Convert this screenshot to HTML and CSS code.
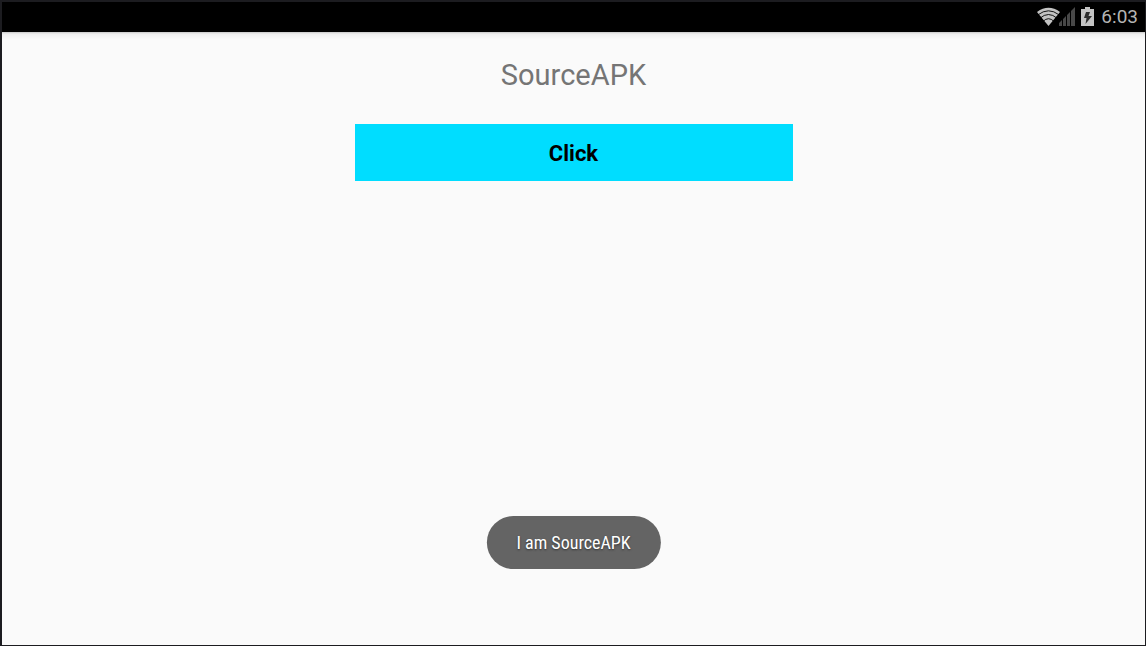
FILE: index.html
```html
<!DOCTYPE html>
<html lang="en">
<head>
<meta charset="utf-8">
<meta name="viewport" content="width=device-width, initial-scale=1">
<title>SourceAPK</title>
<link rel="stylesheet" href="styles.css">
</head>
<body>
<div class="screen">
  <header class="status-bar">
    <svg class="status-icons" width="58" height="20" viewBox="0 0 58 20" aria-hidden="true">
      <path d="M0 5Q11.500-3.400 23 5L11.500 19Z" fill="#c3c3c3"/>
      <g fill="none" stroke="#000" stroke-width=".9">
        <path d="M1 7.800Q11.500-.2 22 7.800"/>
        <path d="M3 11.200Q11.500 3.800 20 11.200"/>
        <path d="M6 14.400Q11.500 9 17 14.400"/>
      </g>
      <path d="M22 19v-3l3-3v6zM26 19v-7l3-3v10zM30 19V8l3-3v14zM34 19V4l4-4v19z" fill="#484848"/>
      <path d="M44 2h4V0h5v2h4v17H44z" fill="#c3c3c3"/>
      <path d="M49 5h4l-1.500 4H55l-6.500 8 1-6H47z" fill="#2b2b2b"/>
    </svg>
    <time class="clock">6:03</time>
  </header>
  <main class="content">
    <h1 class="title">SourceAPK</h1>
    <button class="click-button" type="button">Click</button>
  </main>
  <div class="toast" role="status">I am SourceAPK</div>
</div>
</body>
</html>
```
FILE: styles.css
```css
* {
  box-sizing: border-box;
}

body {
  margin: 0;
  font-family: Roboto, "Liberation Sans", sans-serif;
}

.screen {
  position: relative;
  display: flex;
  flex-direction: column;
  min-height: 100vh;
  border: solid #1c1c20;
  border-width: 2px 1px 1px 2px;
  background: #fafafa;
}

.status-bar {
  display: flex;
  align-items: center;
  justify-content: flex-end;
  gap: 6px;
  height: 30px;
  padding-right: 7px;
  background: #000;
  color: #b4b4b4;
}

.status-icons {
  display: block;
}

.clock {
  font-size: 19px;
  line-height: 30px;
}

.content {
  display: flex;
  flex: 1;
  flex-direction: column;
  align-items: center;
  gap: 29px;
  padding-top: 24px;
  background: linear-gradient(#c8c8c8, #eee 2px, #fafafa 8px);
}

.title {
  margin: 0;
  color: #757575;
  font-size: 29px;
  font-weight: 400;
  line-height: 39px;
}

.click-button {
  width: 438px;
  max-width: 100%;
  padding: 17px 16px 15px;
  border: 0;
  background: #00ddff;
  color: #000;
  font-family: Roboto, "Liberation Sans", sans-serif;
  font-size: 22px;
  font-weight: 700;
  line-height: 25px;
}

.toast {
  position: absolute;
  bottom: 76px;
  left: 50%;
  padding: 15px 30px;
  border-radius: 27px;
  background: #646464;
  color: #fff;
  font-family: "Roboto Condensed", Roboto, "Liberation Sans", sans-serif;
  font-size: 18px;
  line-height: 23px;
  text-shadow: 0 1px 2px #333;
  white-space: nowrap;
  transform: translateX(-50%);
}
```
